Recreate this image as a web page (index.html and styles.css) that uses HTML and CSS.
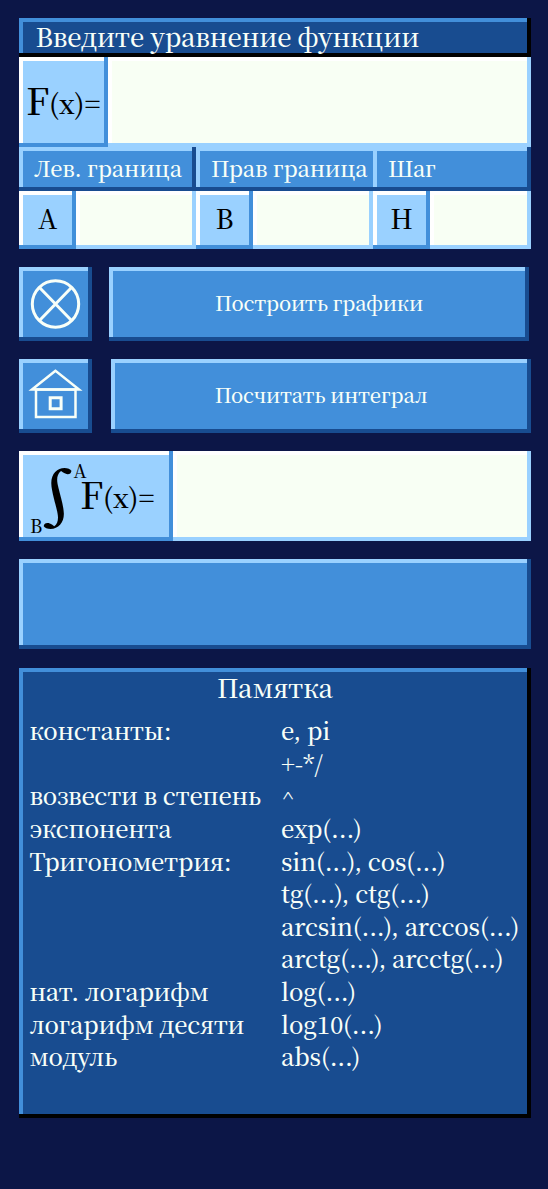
FILE: index.html
```html
<!DOCTYPE html>
<html lang="ru">
<head>
<meta charset="utf-8">
<title>Функции</title>
<link rel="stylesheet" href="styles.css">
</head>
<body>
<main class="app">
  <h1 class="title deep">Введите уравнение функции</h1>
  <div class="entry">
    <div class="label label-fn pale"><span class="big">F</span><span class="arg">(x)=</span></div>
    <div class="field cream"></div>
  </div>
  <div class="bounds">
    <div class="head blue">Лев. граница</div>
    <div class="head blue open">Прав граница</div>
    <div class="head blue">Шаг</div>
    <div class="cell"><div class="letter pale">A</div><div class="field cream"></div></div>
    <div class="cell"><div class="letter pale">B</div><div class="field cream"></div></div>
    <div class="cell"><div class="letter pale">H</div><div class="field cream"></div></div>
  </div>
  <div class="actions actions-plot">
    <div class="icon blue">
      <svg width="73" height="74" viewBox="0 0 73 74" fill="none" stroke="#f8fff8" stroke-width="3"><circle cx="36.5" cy="37" r="23.2"/><path d="M20.5 20.5l32 33M52.500 20.500l-32 33"/></svg>
    </div>
    <div class="button blue">Построить графики</div>
  </div>
  <div class="actions">
    <div class="icon blue">
      <svg width="73" height="74" viewBox="0 0 73 74" fill="none" stroke="#f8fff8" stroke-width="2.500"><path d="M36.500 11.800L13 30.500h47z"/><path d="M17 30.500h39.500v27.500H17z"/><path stroke-width="3" d="M31.200 38.700h10.900v11H31.200z"/></svg>
    </div>
    <div class="button blue">Посчитать интеграл</div>
  </div>
  <div class="entry entry-integral">
    <div class="label label-int pale">
      <span class="sign">∫</span><span class="limit upper">A</span><span class="limit lower">B</span>
      <span class="big">F</span><span class="arg">(x)=</span>
    </div>
    <div class="field cream"></div>
  </div>
  <div class="result blue"></div>
  <section class="memo deep">
    <h2 class="memo-title">Памятка</h2>
    <div class="memo-grid">
      <span>константы:</span><span>e, pi</span>
      <span></span><span>+-*/</span>
      <span>возвести в степень</span><span>^</span>
      <span>экспонента</span><span>exp(...)</span>
      <span>Тригонометрия:</span><span>sin(...), cos(...)</span>
      <span></span><span>tg(...), ctg(...)</span>
      <span></span><span>arcsin(...), arccos(...)</span>
      <span></span><span>arctg(...), arcctg(...)</span>
      <span>нат. логарифм</span><span>log(...)</span>
      <span>логарифм десяти</span><span>log10(...)</span>
      <span>модуль</span><span>abs(...)</span>
    </div>
  </section>
</main>
</body>
</html>
```
FILE: styles.css
```css
* { box-sizing: border-box; }
body {
  margin: 0;
  background: #0c1647;
  color: #f8fff8;
  font-family: "Noto Serif CJK SC", "Noto Serif", "Liberation Serif", serif;
  font-weight: 500;
}
.app { padding: 18px 17px 0 19px; min-height: 1189px; }

/* bevelled surfaces: lit top-left edge, shaded bottom-right edge */
.deep, .blue, .pale, .cream {
  box-shadow: inset 0 -4px var(--shade), inset -4px 0 var(--shade), inset 4px 0 var(--lit), inset 0 4px var(--lit);
}
.deep { background: #184c90; --lit: #428fda; --shade: #000; }
.blue { background: #428fda; --lit: #9ad1ff; --shade: #184c90; }
.pale { background: #9ad1ff; --lit: #fff; --shade: #428fda; color: #000; }
.cream { background: #f8fff4; --lit: #fff; --shade: #9ad1ff; }

.title { margin: 0; height: 39px; padding-left: 16.5px; font-size: 25.7px; font-weight: inherit; line-height: 35px; letter-spacing: -0.17px; white-space: nowrap; }

.entry { display: flex; height: 90px; }
.field { flex: 1; }
.label { position: relative; display: flex; white-space: nowrap; }
.label-fn { width: 89px; padding-left: 7px; }
.big { font-size: 37px; line-height: 84px; letter-spacing: -0.5px; }
.arg { font-size: 27.3px; line-height: 91px; }

.bounds { display: grid; grid-template-columns: 177px 177px 158px; grid-template-rows: 44px 58px; }
.head { padding-left: 15px; font-size: 22px; line-height: 41px; letter-spacing: -0.15px; white-space: nowrap; }
.open { box-shadow: inset 0 -4px var(--shade), inset 4px 0 var(--lit), inset 0 4px var(--lit); }
.cell { display: flex; }
.letter { width: 57px; font-size: 26.5px; line-height: 54px; text-align: center; }

.actions { display: flex; gap: 19px; height: 74px; margin-top: 18px; }
.actions-plot { gap: 17px; padding-right: 2px; }
.icon { width: 73px; }
.icon svg { display: block; }
.button { flex: 1; font-size: 20.2px; line-height: 72px; letter-spacing: -0.18px; text-align: center; }

.entry-integral { margin-top: 18px; }
.label-int { width: 154px; padding-left: 61px; }
.sign { position: absolute; left: 8px; top: 5px; font-size: 61px; font-weight: 600; line-height: 80px; transform: scaleX(1.15); }
.limit { position: absolute; font-size: 18px; line-height: 20px; }
.upper { left: 54.5px; top: 9px; }
.lower { left: 11px; top: 64px; }

.result { height: 90px; margin-top: 18px; }
.memo { height: 450px; margin-top: 19px; padding: 4px 4px 0 11px; }
.memo-title { margin: 0; padding-right: 7px; font-size: 25.7px; font-weight: inherit; line-height: 30px; text-align: center; }
.memo-grid { display: grid; grid-template-columns: 251px auto; grid-auto-rows: 32.6px; margin-top: 12.2px; font-size: 23.85px; line-height: 32.6px; letter-spacing: -0.17px; white-space: nowrap; }
.memo-grid > :nth-child(odd) { margin-left: -0.5px; letter-spacing: -0.24px; }
```
